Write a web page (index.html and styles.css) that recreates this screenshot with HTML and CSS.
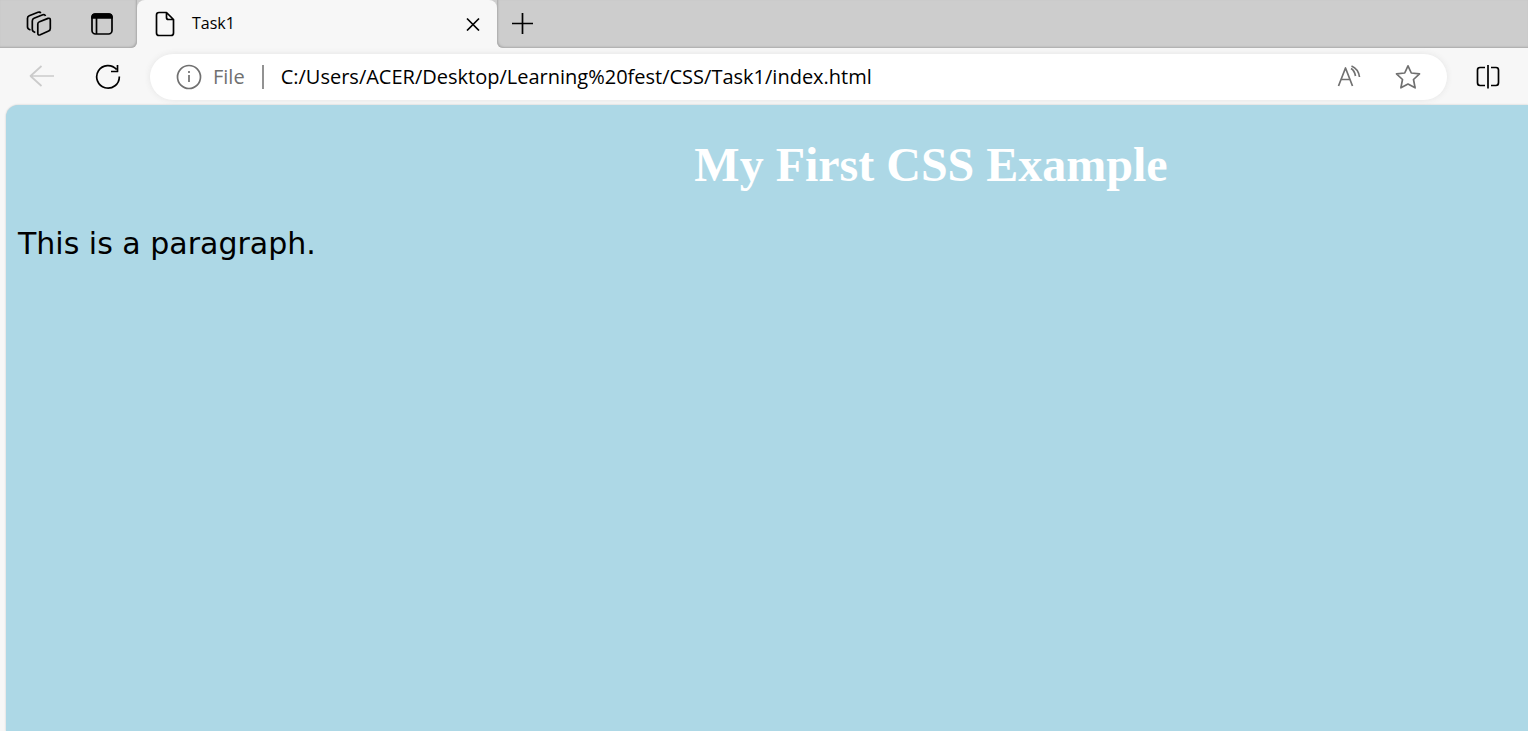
FILE: index.html
```html
<!DOCTYPE html>
<html lang="en">
<head>
<meta charset="utf-8">
<title>Task1</title>
<link rel="stylesheet" href="styles.css">
</head>
<body>
<header class="browser">
  <div class="tab-strip">
    <div class="strip-actions">
      <button class="icon-button" type="button" aria-label="Workspaces">
        <svg width="26" height="26" viewBox="0 0 26 26"><path d="M13.500 10.800 22 7.400Q24.300 6.700 24.300 8.900V17.500Q24.300 19.300 22.600 20L14.300 23.700Q11.800 24.700 11.800 22.200V13Q11.800 11.500 13.500 10.800ZM9.300 21.500Q6.300 20.500 6.300 18.500V10Q6.300 8 8 7.300L16.800 3.800Q18.800 3 19.500 5M4.500 19Q1.500 18 1.500 16V7.300Q1.500 5.500 3.200 4.800L12 1.300Q14 .5 14.700 2.300"/></svg>
      </button>
      <button class="icon-button" type="button" aria-label="Tab actions">
        <svg width="24" height="24" viewBox="0 0 24 24"><rect x="2" y="2" width="20" height="20" rx="3.500"/><path d="M6.500 6V22"/><path class="solid" d="M2 6V5Q2 2 5 2H19Q22 2 22 5V6Z"/></svg>
      </button>
    </div>
    <div class="tab">
      <svg width="20" height="26" viewBox="0 0 20 26"><path d="M4 1.500H11.500L18.500 8.500V22Q18.500 24.500 16 24.500H4Q1.500 24.500 1.500 22V4Q1.500 1.500 4 1.500ZM11.500 1.500V6.500Q11.500 8.500 13.500 8.500H18.500"/></svg>
      <span class="tab-title">Task1</span>
      <button class="icon-button" type="button" aria-label="Close tab">
        <svg width="14" height="14" viewBox="0 0 14 14"><path d="M1 1.500 13 13.500M13 1.500 1 13.500"/></svg>
      </button>
    </div>
    <div class="strip-rest">
      <button class="icon-button" type="button" aria-label="New tab">
        <svg width="22" height="22" viewBox="0 0 22 22"><path d="M10.500 0V21M0 10.500H21"/></svg>
      </button>
    </div>
  </div>
  <div class="toolbar">
    <button class="icon-button faded" type="button" aria-label="Back" disabled>
      <svg width="26" height="24" viewBox="0 0 26 24"><path d="M13.500 1 2.500 11 13.500 21M2.500 11H26"/></svg>
    </button>
    <button class="icon-button" type="button" aria-label="Refresh">
      <svg width="26" height="26" viewBox="0 0 26 26"><path d="M24.300 12.500A11.300 11.300 0 1 1 21.600 5.500M22.500 1V7.500H16"/></svg>
    </button>
    <form class="address-bar">
      <button class="site-info" type="button">
        <svg width="26" height="26" viewBox="0 0 26 26"><circle cx="13" cy="13" r="11.500"/><path d="M13 11V18M13 7V9"/></svg>
        <span>File</span>
      </button>
      <span class="divider"></span>
      <input class="address" type="text" aria-label="Address" value="C:/Users/ACER/Desktop/Learning%20fest/CSS/Task1/index.html">
      <button class="icon-button muted" type="button" aria-label="Read aloud">
        <svg width="24" height="24" viewBox="0 0 24 24"><path d="M1.500 21 8.500 3 15.500 21M4 14.500H13M14 3.500Q17.500 5.500 18.500 11M14.500 1Q21.500 4 22.500 12"/></svg>
      </button>
      <button class="icon-button muted" type="button" aria-label="Add to favorites">
        <svg width="26" height="26" viewBox="0 0 26 26"><path d="M13 1.800 16.300 9 24.500 9.900 18.500 15.500 20.100 23.800 13 20 5.900 23.800 7.500 15.500 1.500 9.900 9.700 9Z"/></svg>
      </button>
    </form>
    <button class="icon-button" type="button" aria-label="Split screen">
      <svg width="24" height="26" viewBox="0 0 24 26"><path d="M9 3.500H4Q1.500 3.500 1.500 6V18.500Q1.500 21.500 4 21.500H9M15 3.500H20Q22.500 3.500 22.500 6V18.500Q22.500 21.500 20 21.500H15M12 1V24.500"/></svg>
    </button>
  </div>
</header>
<main class="page">
  <h1 class="page-title">My First CSS Example</h1>
  <p class="page-text">This is a paragraph.</p>
</main>
</body>
</html>
```
FILE: styles.css
```css
* {
  box-sizing: border-box;
}

body {
  margin: 0;
  min-height: 100vh;
  display: flex;
  flex-direction: column;
  background: #f7f7f7;
  color: #000;
  font-family: "Segoe UI", "Open Sans", sans-serif;
  overflow-x: hidden;
}

svg {
  display: block;
  flex: none;
  fill: none;
  stroke: currentColor;
  stroke-width: 1.7;
  stroke-linejoin: round;
}

svg .solid {
  fill: currentColor;
}

button {
  padding: 0;
  border: 0;
  background: none;
  color: inherit;
  font: inherit;
}

.icon-button {
  display: flex;
  flex: none;
}

.tab-strip {
  display: flex;
  height: 48px;
  background: linear-gradient(#cdcdcd 50%, #f7f7f7 50%);
}

.strip-actions,
.strip-rest {
  display: flex;
  align-items: center;
  background: #cdcdcd;
}

.strip-actions {
  gap: 38px;
  padding: 0 23px 0 26px;
  border-radius: 0 0 6px 0;
  box-shadow: inset -1px -1px 2px #a8a8a8;
}

.strip-rest {
  flex: 1;
  padding: 0 15px;
  border-radius: 0 0 0 6px;
  box-shadow: inset 1px -1px 2px #a8a8a8;
}

.tab {
  display: flex;
  align-items: center;
  gap: 17px;
  width: 360px;
  padding: 0 17px 0 18px;
  border-radius: 8px 8px 0 0;
  background: #f7f7f7;
}

.tab-title {
  flex: 1;
  padding-bottom: 2px;
  font-size: 16px;
}

.toolbar {
  display: flex;
  align-items: center;
  height: 57px;
  gap: 29px;
  padding: 0 28px;
}

.toolbar > .icon-button:nth-child(2) {
  margin-left: 12px;
}

.faded {
  color: #cbcbcb;
}

.muted,
.site-info {
  color: #707070;
}

.address-bar {
  display: flex;
  flex: 1;
  align-items: center;
  min-width: 0;
  height: 46px;
  gap: 17px;
  padding: 0 26px;
  border-radius: 23px;
  background: #fff;
  box-shadow: 0 0 6px #e4e4e4;
}

.site-info {
  display: flex;
  align-items: center;
  gap: 11px;
  font-size: 20px;
}

.divider {
  width: 2px;
  height: 24px;
  background: #929292;
}

.address {
  flex: 1;
  min-width: 0;
  padding: 0;
  border: 0;
  outline: 0;
  background: none;
  color: #000;
  font-family: inherit;
  font-size: 20px;
}

.muted + .muted {
  margin-left: 17px;
}

.page {
  flex: 1;
  margin-left: 6px;
  padding: 32px 12px;
  border-radius: 12px 0 0 0;
  background: lightblue;
  box-shadow: 0 0 2px #c0c0c0;
}

.page-title {
  margin: 0;
  padding-left: 328px;
  color: #fff;
  font: bold 48px/56px "Times New Roman", "Liberation Serif", serif;
  text-align: center;
}

.page-text {
  margin: 33px 0 0;
  font: 30px/36px Verdana, "DejaVu Sans", sans-serif;
}
```
